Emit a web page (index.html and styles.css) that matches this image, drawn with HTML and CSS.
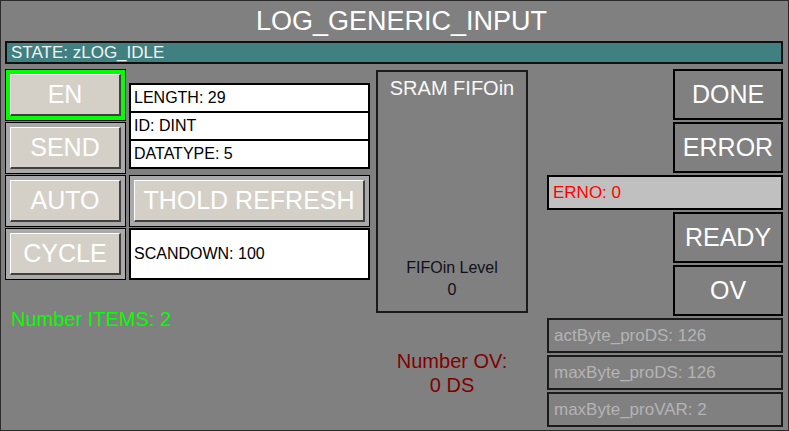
FILE: index.html
```html
<!DOCTYPE html>
<html lang="en">

<head>
    <meta charset="UTF-8">
    <meta name="viewport" content="width=device-width, initial-scale=1.0">
    <title>LOG_GENERIC_INPUT</title>
    <link rel="stylesheet" href="styles.css">
</head>

<body>
    <div class="panel">
        <h1 class="title">LOG_GENERIC_INPUT</h1>
        <div class="state">STATE: zLOG_IDLE</div>

        <div class="main">
            <div class="left">
                <div class="controls">
                    <div class="cell cell-on"><div class="btn">EN</div></div>
                    <div class="info">
                        <div class="info-row">LENGTH: 29</div>
                        <div class="info-row">ID: DINT</div>
                        <div class="info-row">DATATYPE: 5</div>
                    </div>
                    <div class="cell"><div class="btn">SEND</div></div>
                    <div class="cell"><div class="btn">AUTO</div></div>
                    <div class="cell"><div class="btn">THOLD REFRESH</div></div>
                    <div class="cell"><div class="btn">CYCLE</div></div>
                    <div class="field">SCANDOWN: 100</div>
                </div>
                <div class="items">Number ITEMS: 2</div>
            </div>

            <div class="middle">
                <div class="fifo">
                    <div class="fifo-title">SRAM FIFOin</div>
                    <div class="fifo-level">FIFOin Level<br>0</div>
                </div>
                <div class="ov-count">Number OV:<br>0 DS</div>
            </div>

            <div class="right">
                <div class="flag">DONE</div>
                <div class="flag">ERROR</div>
                <div class="erno">ERNO: 0</div>
                <div class="flag">READY</div>
                <div class="flag">OV</div>
                <div class="stat">actByte_proDS: 126</div>
                <div class="stat">maxByte_proDS: 126</div>
                <div class="stat">maxByte_proVAR: 2</div>
            </div>
        </div>
    </div>
</body>

</html>
```

FILE: styles.css
```css
body {
    margin: 0;
    font-family: "Liberation Sans", Arial, sans-serif;
}

.panel {
    width: 789px;
    height: 431px;
    box-sizing: border-box;
    border: 1px solid #2a2a2a;
    background: #808080;
    padding: 0 5px 0 4px;
}

.title {
    margin: 0;
    height: 40px;
    line-height: 40px;
    padding-left: 15px;
    text-align: center;
    font-size: 27px;
    font-weight: normal;
    color: #fff;
}

.state {
    height: 23px;
    box-sizing: border-box;
    border: 2px solid #101010;
    background: #408080;
    color: #f4f4f4;
    font-size: 17px;
    line-height: 19px;
    padding-left: 4px;
}

.main {
    display: flex;
    flex-direction: row;
    align-items: flex-start;
    margin-top: 5px;
}

.left {
    width: 365px;
}

.controls {
    display: grid;
    grid-template-columns: 121px 241px;
    grid-template-rows: repeat(4, 52px);
    column-gap: 3px;
    row-gap: 1px;
}

.cell {
    box-sizing: border-box;
    border: 1px solid #000;
    background: #a9a9a9;
    padding: 4px;
}

.cell-on {
    background: #00ff00;
}

.btn {
    height: 100%;
    box-sizing: border-box;
    border: 1px solid;
    border-color: #fff #404040 #404040 #fff;
    border-width: 1px 2px 2px 1px;
    background: #d4d0c8;
    color: #fff;
    font-size: 25px;
    display: flex;
    align-items: center;
    justify-content: center;
}

.info {
    grid-row: span 2;
    align-self: start;
    margin-top: 14px;
    border: 2px solid #000;
    background: #fff;
}

.info-row {
    height: 26px;
    line-height: 26px;
    padding-left: 3px;
    font-size: 16px;
    color: #000;
}

.info-row+.info-row {
    border-top: 2px solid #000;
}

.field {
    box-sizing: border-box;
    border: 2px solid #000;
    background: #fff;
    font-size: 16px;
    padding-left: 3px;
    display: flex;
    align-items: center;
}

.items {
    margin-top: 27px;
    padding-left: 6px;
    font-size: 20px;
    line-height: 24px;
    color: #00ff00;
}

.middle {
    width: 152px;
    margin-left: 6px;
}

.fifo {
    height: 243px;
    margin-top: 1px;
    box-sizing: border-box;
    border: 2px solid #1a1a1a;
    display: flex;
    flex-direction: column;
    justify-content: space-between;
    text-align: center;
}

.fifo-title {
    padding-top: 4px;
    font-size: 20px;
    line-height: 24px;
    color: #f8f8f8;
}

.fifo-level {
    padding-bottom: 10px;
    font-size: 16px;
    line-height: 22px;
    color: #101018;
}

.ov-count {
    margin-top: 36px;
    text-align: center;
    font-size: 20px;
    line-height: 24px;
    color: #800000;
}

.right {
    width: 236px;
    margin-left: 19px;
    display: flex;
    flex-direction: column;
    gap: 2px;
}

.flag {
    align-self: flex-end;
    width: 110px;
    height: 51px;
    box-sizing: border-box;
    border: 2px solid #000;
    color: #fff;
    font-size: 25px;
    display: flex;
    align-items: center;
    justify-content: center;
}

.erno {
    height: 35px;
    box-sizing: border-box;
    border: 2px solid #000;
    background: #c0c0c0;
    color: #f00;
    font-size: 17px;
    padding-left: 4px;
    display: flex;
    align-items: center;
}

.stat {
    height: 35px;
    box-sizing: border-box;
    border: 2px solid #1a1a1a;
    color: #b4b4b4;
    font-size: 17px;
    padding-left: 5px;
    display: flex;
    align-items: center;
}
```
